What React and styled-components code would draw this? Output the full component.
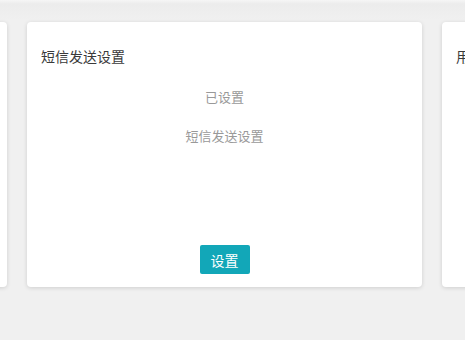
import styled, { createGlobalStyle } from "styled-components";

const GlobalStyle = createGlobalStyle`
  html, body {
    margin: 0;
    padding: 0;
    background: #f0f0f0;
    font-family: "Noto Sans CJK SC", "Noto Sans", sans-serif;
  }
  #root {
    width: 465px;
    height: 340px;
    overflow: hidden;
  }
`;

const Page = styled.div`
  width: 465px;
  height: 340px;
  overflow: hidden;
  background: linear-gradient(#f6f6f6 0, #ececec 4px, #f0f0f0 20px);
  padding-top: 22px;
  box-sizing: border-box;
`;

const Row = styled.div`
  display: flex;
  gap: 20px;
  margin-left: -388px;
`;

const Card = styled.div`
  flex: 0 0 395px;
  height: 265px;
  background: #fff;
  border-radius: 4px;
  box-shadow: 0 1px 4px rgba(0, 0, 0, 0.14);
  display: flex;
  flex-direction: column;
  box-sizing: border-box;
  padding: 24px 14px 13px;
`;

const Title = styled.div`
  font-size: 14px;
  line-height: 20px;
  color: #3a3a3a;
`;

const Status = styled.div`
  text-align: center;
  font-size: 13px;
  line-height: 20px;
  color: #999;
  margin-top: ${(p) => p.$gap}px;
`;

const Footer = styled.div`
  margin-top: auto;
  display: flex;
  justify-content: center;
`;

const Button = styled.button`
  width: 50px;
  height: 29px;
  border: none;
  border-radius: 2px;
  background: #12a7b8;
  color: #fff;
  font-family: inherit;
  font-size: 14px;
  padding: 0;
  cursor: pointer;
`;

const SmsCard = ({ title, status, desc }) => (
  <Card>
    <Title>{title}</Title>
    {status && <Status $gap={21}>{status}</Status>}
    {desc && <Status $gap={19}>{desc}</Status>}
    <Footer>
      <Button>设置</Button>
    </Footer>
  </Card>
);

export default function App() {
  return (
    <>
      <GlobalStyle />
      <Page>
        <Row>
          <SmsCard title="短信模板设置" status="已设置" desc="短信模板设置" />
          <SmsCard title="短信发送设置" status="已设置" desc="短信发送设置" />
          <SmsCard title="用户短信设置" status="已设置" desc="用户短信设置" />
        </Row>
      </Page>
    </>
  );
}
